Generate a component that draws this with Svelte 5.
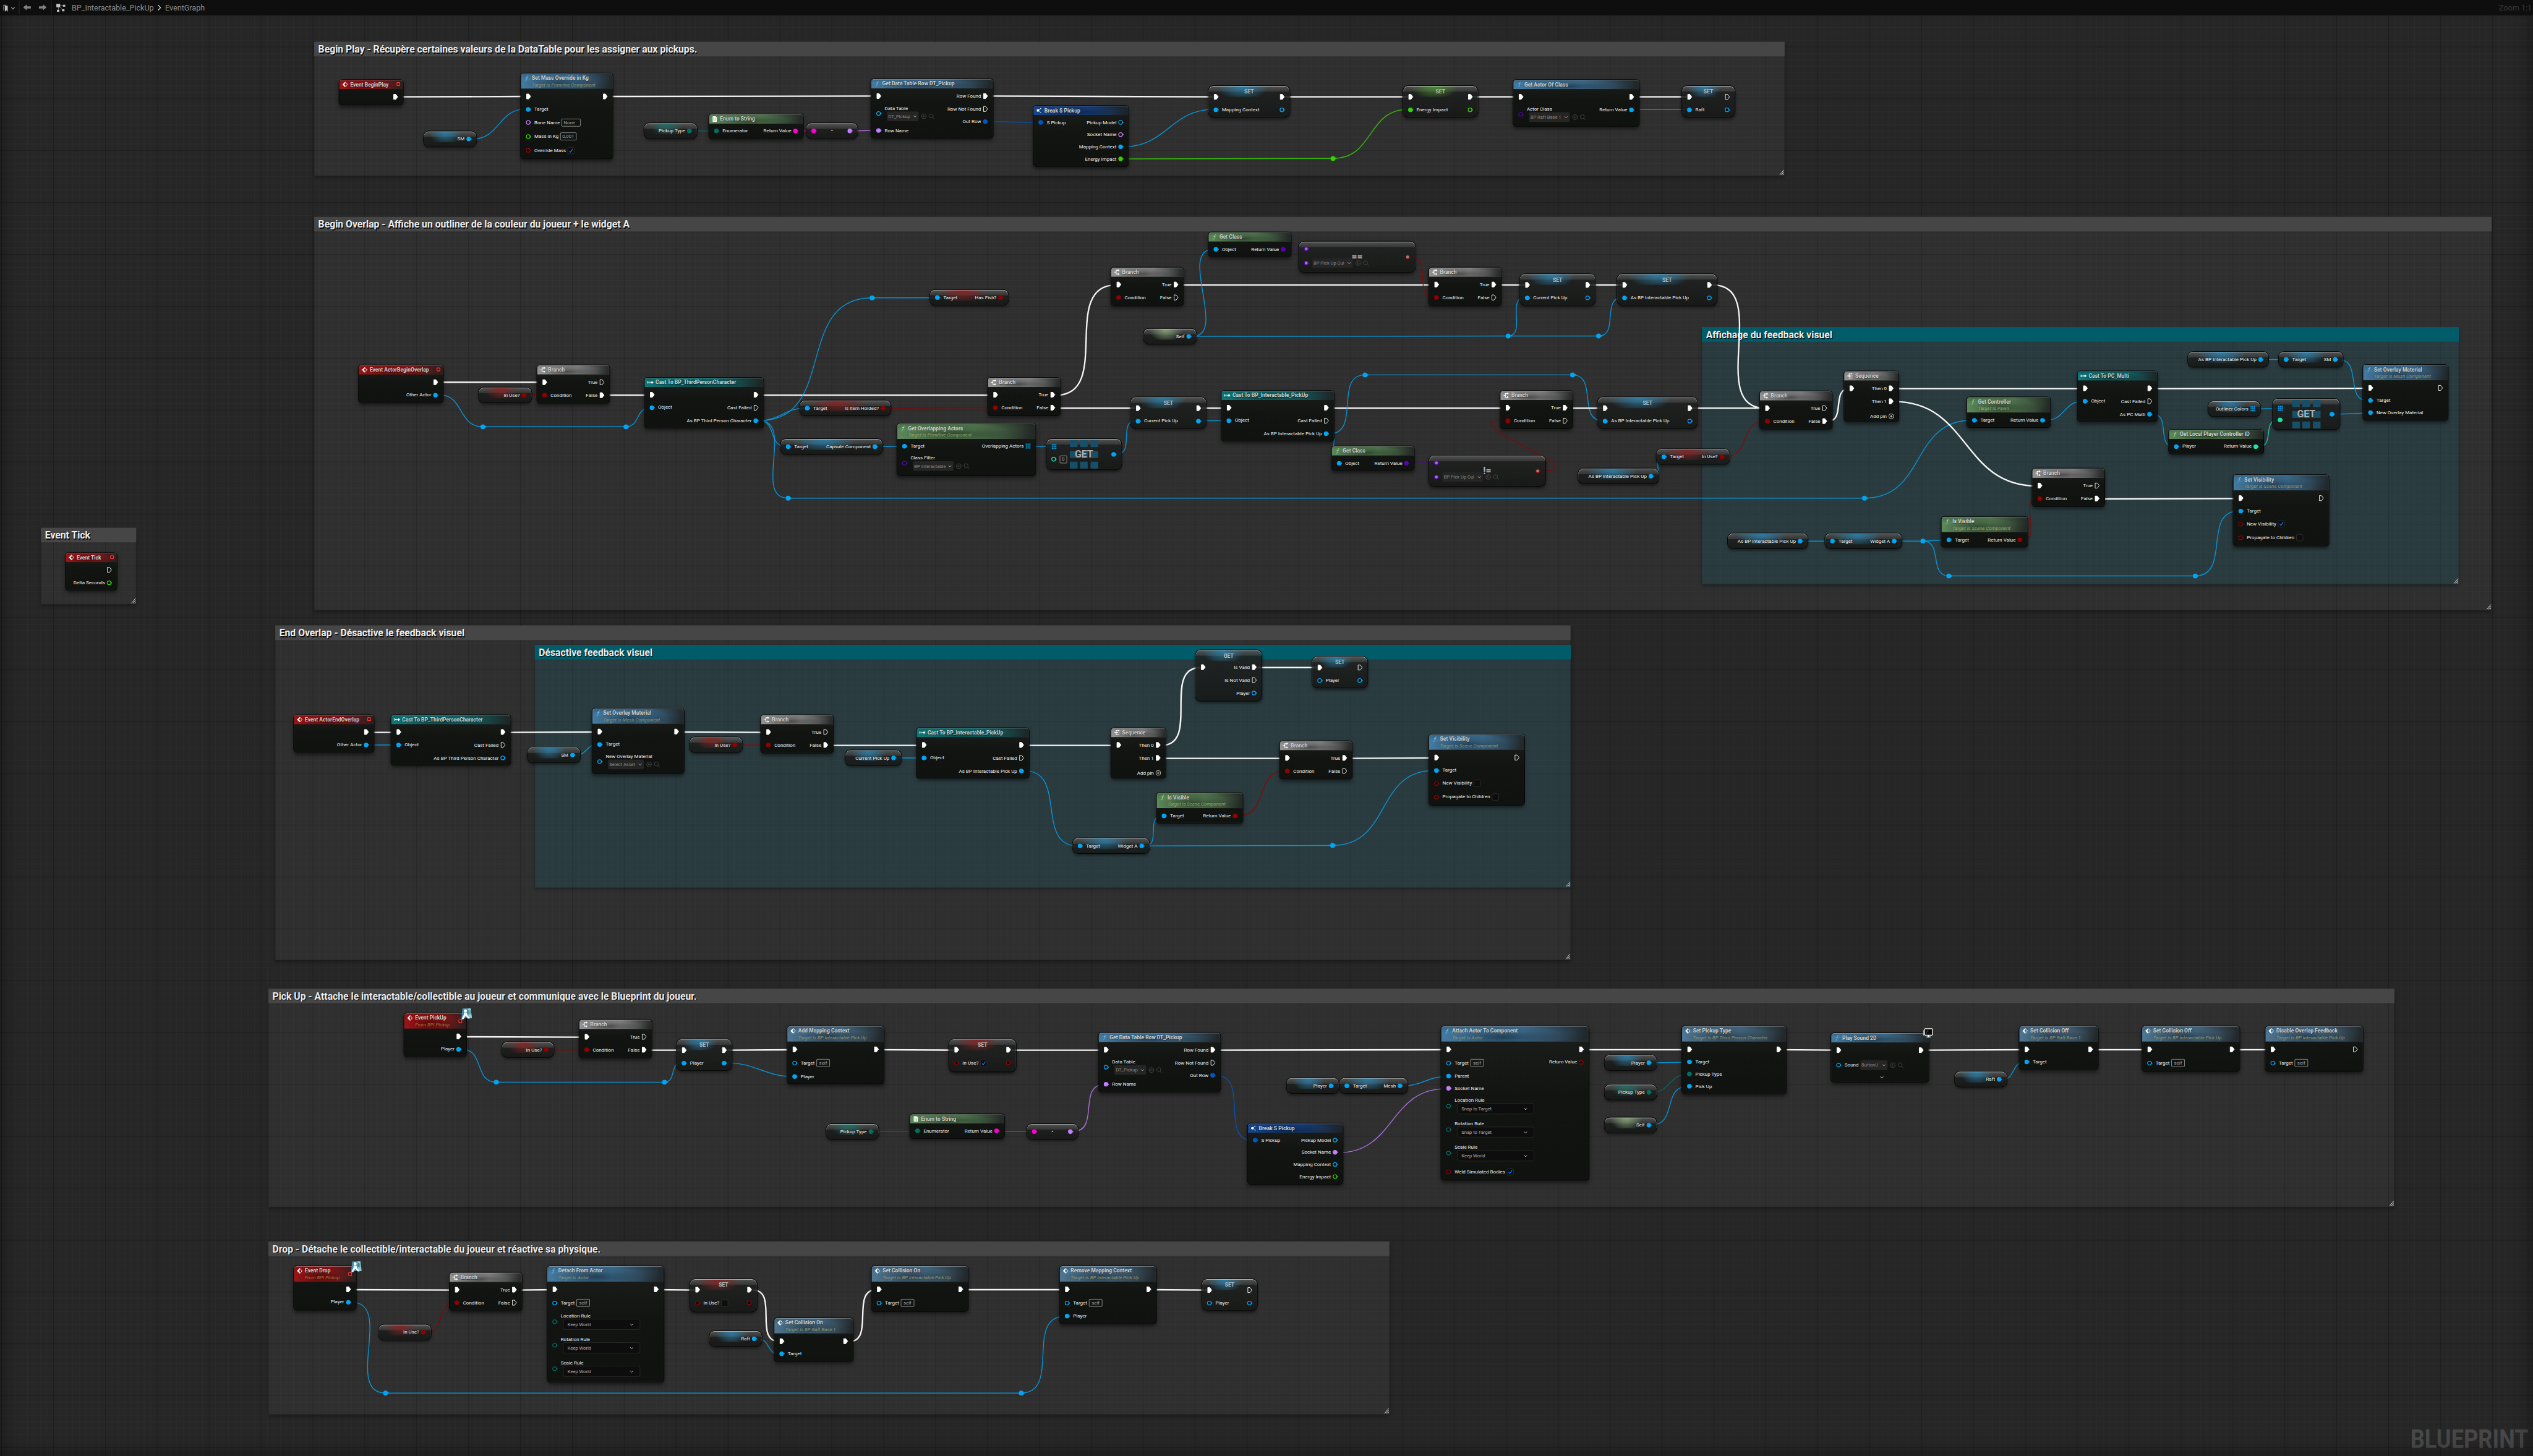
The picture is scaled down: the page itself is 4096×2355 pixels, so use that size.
<script>
  // Pin colours by data type
  const OBJ = '#00a6f4', BOOL = '#930000', ENUM = '#006f65', STR = '#ff00d4', NAME = '#c67ffc';
  const STRUCT = '#0057c8', FLOAT = '#37d200', CLS = '#5b00bb', INT = '#1fe3aa', W = '#ffffff';

  // Pin builders: exec, data, array
  const e = (f = 1, t = '', o = {}) => ({ k: 'e', c: W, f, t, h: 32, ...o });
  const d = (c, f, t = '', o = {}) => ({ k: 'd', c, f, t, h: 30, ...o });

  const self = (h = 35) => d(OBJ, 0, 'Target', { v: 'self', h });
  const rule = (t, en) => d(ENUM, 0, t, { en, h: 58 });

  const comments = [
    { x: 775, y: 103, w: 3627, h: 331, t: 'Begin Play - Récupère certaines valeurs de la DataTable pour les assigner aux pickups.' },
    { x: 775, y: 535, w: 5371, h: 971, t: 'Begin Overlap - Affiche un outliner de la couleur du joueur + le widget A' },
    { x: 4198, y: 807, w: 1867, h: 635, teal: 1, t: 'Affichage du feedback visuel' },
    { x: 101, y: 1302, w: 235, h: 189, t: 'Event Tick' },
    { x: 679, y: 1543, w: 3195, h: 826, t: 'End Overlap - Désactive le feedback visuel' },
    { x: 1319, y: 1591, w: 2556, h: 599, teal: 1, t: 'Désactive feedback visuel' },
    { x: 662, y: 2439, w: 5244, h: 539, t: 'Pick Up - Attache le interactable/collectible au joueur et communique avec le Blueprint du joueur.' },
    { x: 662, y: 3063, w: 2765, h: 427, t: 'Drop - Détache le collectible/interactable du joueur et réactive sa physique.' }
  ];

  const N = (kind, x, y, w, h, title, sub, l, r, o = {}) => ({ kind, x, y, w, h, title, sub, l, r, ...o });
  const branch = (x, y, t, f, c = 1) => N('branch', x, y, 178, 93, 'Branch', '', [e(), d(BOOL, c, 'Condition', { h: 32 })], [e(t, 'True'), e(f, 'False')]);
  const cast = (x, y, w, name, as, f) => N('cast', x, y, w, 123, 'Cast To ' + name, '', [e(), d(OBJ, 1, 'Object', { h: 31 })], [e(), e(0, 'Cast Failed'), d(OBJ, f, as, { h: 32 })]);
  const seq = (x, y) => N('seq', x, y, 134, 123, 'Sequence', '', [e()], [e(1, 'Then 0'), e(1, 'Then 1'), { k: 'plus', t: 'Add pin', h: 42 }]);
  const isVisible = (x, y) => N('pure', x, y, 212, 74, 'Is Visible', 'Target is Scene Component', [d(OBJ, 1, 'Target', { h: 32 })], [d(BOOL, 1, 'Return Value', { h: 32 })]);
  const setVis = (x, y, on) => N('func', x, y, 235, 174, 'Set Visibility', 'Target is Scene Component',
    [e(), d(OBJ, 1, 'Target', { h: 31 }), d(BOOL, 0, 'New Visibility', { cb: on, h: 33 }), d(BOOL, 0, 'Propagate to Children', { cb: 0, h: 35 })], [e(0)]);
  const getRow = (x, y) => N('func', x, y, 300, 145, 'Get Data Table Row DT_Pickup', '',
    [e(), d(OBJ, 0, 'Data Table', { sel: 'DT_Pickup', sw: 78, h: 54 }), d(NAME, 1, 'Row Name')],
    [e(1, 'Row Found'), e(0, 'Row Not Found'), d(STRUCT, 1, 'Out Row')]);
  const brk = (x, y, s, m, g) => N('break', x, y, 234, 149, 'Break S Pickup', '', [d(STRUCT, 1, 'S Pickup')],
    [d(OBJ, 0, 'Pickup Model'), d(NAME, s, 'Socket Name'), d(OBJ, m, 'Mapping Context'), d(FLOAT, g, 'Energy Impact')]);
  const enumStr = (x, y) => N('enum', x, y, 232, 59, 'Enum to String', '', [d(ENUM, 1, 'Enumerator')], [d(STR, 1, 'Return Value')]);
  const getClass = (x, y) => N('pure', x, y, 203, 59, 'Get Class', '', [d(OBJ, 1, 'Object', { h: 32 })], [d(CLS, 1, 'Return Value', { h: 32 })]);

  const nodes = [
    // Begin play
    N('event', 837, 197, 157, 61, 'Event BeginPlay', '', [], [e()]),
    N('func', 1285, 181, 226, 210, 'Set Mass Override in Kg', 'Target is Primitive Component',
      [e(), d(OBJ, 1, 'Target', { h: 31 }), d(NAME, 0, 'Bone Name', { v: 'None', vw: 47, h: 34 }), d(FLOAT, 0, 'Mass in Kg', { v: '0,001', vw: 40, h: 35 }), d(BOOL, 0, 'Override Mass', { cb: 1, h: 34 })], [e()]),
    enumStr(1749, 282),
    getRow(2149, 195),
    brk(2549, 261, 0, 1, 1),
    N('func', 3733, 197, 310, 114, 'Get Actor Of Class', '', [e(), d(CLS, 0, 'Actor Class', { sel: 'BP Raft Base 1', sw: 100, h: 54 })], [e(), d(OBJ, 1, 'Return Value', { h: 31 })]),
    // Begin overlap
    N('event', 885, 901, 208, 91, 'Event ActorBeginOverlap', '', [], [e(), d(OBJ, 1, 'Other Actor', { h: 31 })]),
    branch(1325, 901, 0, 1),
    cast(1590, 932, 293, 'BP_ThirdPersonCharacter', 'As BP Third Person Character', 1),
    branch(2437, 932, 1, 1),
    N('pure', 2213, 1045, 341, 128, 'Get Overlapping Actors', 'Target is Primitive Component', [d(OBJ, 1, 'Target'), d(CLS, 0, 'Class Filter', { sel: 'BP Interactable', sw: 100, h: 54 })], [d(OBJ, 1, 'Overlapping Actors', { k: 'a' })]),
    branch(2741, 660, 1, 0),
    getClass(2981, 573),
    branch(3525, 660, 1, 0),
    cast(3013, 964, 277, 'BP_Interactable_PickUp', 'As BP Interactable Pick Up', 1),
    branch(3701, 964, 1, 0),
    getClass(3285, 1101),
    // Affichage
    branch(4341, 965, 0, 1),
    seq(4549, 916),
    N('pure', 4852, 980, 205, 74, 'Get Controller', 'Target is Pawn', [d(OBJ, 1, 'Target', { h: 32 })], [d(OBJ, 1, 'Return Value', { h: 32 })]),
    cast(5125, 916, 196, 'PC_Multi', 'As PC Multi', 1),
    N('func', 5829, 900, 209, 136, 'Set Overlay Material', 'Target is Mesh Component', [e(), d(OBJ, 1, 'Target'), d(OBJ, 1, 'New Overlay Material')], [e(0)]),
    N('pure', 5350, 1060, 233, 59, 'Get Local Player Controller ID', '', [d(OBJ, 1, 'Player', { h: 31 })], [d(INT, 1, 'Return Value', { h: 31 })]),
    branch(5013, 1156, 0, 1),
    setVis(5509, 1172, 1),
    isVisible(4789, 1275),
    // Event tick
    N('event', 162, 1364, 126, 91, 'Event Tick', '', [], [e(0), d(FLOAT, 0, 'Delta Seconds', { h: 31 })]),
    // End overlap
    N('event', 725, 1764, 197, 91, 'Event ActorEndOverlap', '', [], [e(), d(OBJ, 1, 'Other Actor', { h: 31 })]),
    cast(965, 1764, 294, 'BP_ThirdPersonCharacter', 'As BP Third Person Character', 0),
    N('func', 1461, 1748, 226, 160, 'Set Overlay Material', 'Target is Mesh Component', [e(), d(OBJ, 1, 'Target', { h: 31 }), d(OBJ, 0, 'New Overlay Material', { sel: 'Select Asset', sw: 88, h: 54 })], [e()]),
    branch(1877, 1764, 0, 1),
    cast(2261, 1796, 277, 'BP_Interactable_PickUp', 'As BP Interactable Pick Up', 1),
    seq(2741, 1796),
    branch(3157, 1828, 1, 0),
    isVisible(2853, 1956),
    setVis(3525, 1812, 0),
    // Pick up
    N('event', 997, 2500, 153, 106, 'Event PickUp', 'From BPI Pickup', [], [e(), d(OBJ, 1, 'Player', { h: 31 })], { iface: 1 }),
    branch(1429, 2516, 0, 1),
    N('call', 1942, 2532, 238, 141, 'Add Mapping Context', 'Target is BP Interactable Pick Up', [e(), self(), d(OBJ, 1, 'Player', { h: 32 })], [e()]),
    getRow(2710, 2548),
    enumStr(2245, 2749),
    brk(3078, 2772, 1, 0, 0),
    N('func', 3555, 2532, 364, 379, 'Attach Actor To Component', 'Target is Actor',
      [e(), self(), d(OBJ, 1, 'Parent'), d(NAME, 1, 'Socket Name'), rule('Location Rule', 'Snap to Target'), rule('Rotation Rule', 'Snap to Target'), rule('Scale Rule', 'Keep World'), d(BOOL, 0, 'Weld Simulated Bodies', { cb: 1, h: 34 })],
      [e(), d(BOOL, 0, 'Return Value', { h: 31 })]),
    N('call', 4149, 2532, 257, 166, 'Set Pickup Type', 'Target is BP Third Person Character', [e(), d(OBJ, 1, 'Target'), d(ENUM, 1, 'Pickup Type'), d(OBJ, 1, 'Pick Up')], [e()]),
    N('func', 4517, 2549, 240, 120, 'Play Sound 2D', '', [e(), d(OBJ, 0, 'Sound', { sel: 'ButtonU', sw: 67, inline: 1, h: 41 })], [e()], { more: 1, client: 1 }),
    N('call', 4981, 2532, 194, 106, 'Set Collision Off', 'Target is BP Raft Base 1', [e(), d(OBJ, 1, 'Target')], [e()]),
    N('call', 5284, 2532, 240, 111, 'Set Collision Off', 'Target is BP Interactable Pick Up', [e(), self()], [e()]),
    N('call', 5588, 2532, 240, 111, 'Disable Overlap Feedback', 'Target is BP Interactable Pick Up', [e(), self()], [e(0)]),
    // Drop
    N('event', 725, 3124, 153, 107, 'Event Drop', 'From BPI Pickup', [], [e(), d(OBJ, 1, 'Player', { h: 31 })], { iface: 1 }),
    branch(1109, 3140, 1, 0),
    N('func', 1350, 3124, 287, 285, 'Detach From Actor', 'Target is Actor', [e(), self(), rule('Location Rule', 'Keep World'), rule('Rotation Rule', 'Keep World'), rule('Scale Rule', 'Keep World')], [e()]),
    N('call', 1910, 3252, 194, 106, 'Set Collision On', 'Target is BP Raft Base 1', [e(), d(OBJ, 1, 'Target')], [e()]),
    N('call', 2150, 3124, 238, 111, 'Set Collision On', 'Target is BP Interactable Pick Up', [e(), self()], [e()]),
    N('call', 2614, 3124, 238, 141, 'Remove Mapping Context', 'Target is BP Interactable Pick Up', [e(), self(), d(OBJ, 1, 'Player', { h: 30 })], [e()])
  ];

  // Compact rounded nodes: getters, setters, operators
  const gBlue = '#2c7da6', gRed = '#862424', gTeal = '#226e67', gGreen = '#86a179', gLime = '#4a8a32', gNone = 'transparent';
  const G = (x, y, w, g, l, r) => ({ x, y, w, h: 37, g, l, r, pt: 4 });
  const get = (x, y, w, t, c = OBJ, g = gBlue, k = 'd') => G(x, y, w, g, [], [d(c, 1, t, { k })]);
  const member = (x, y, w, t, c = OBJ, g = gBlue) => G(x, y, w, g, [d(OBJ, 1, 'Target')], [d(c, 1, t)]);
  const set = (x, y, w, t, c, g, inF, outF, o = {}) => ({ x, y, w, h: 76, g, cap: 'SET', pt: 11, l: [e(), d(c, inF, t, { h: 31 })], r: [e(o.ex ?? 1), d(c, outF, '', { h: 31 })] });
  const setUse = (x, y, cb) => ({ x, y, w: 165, h: 80, g: gRed, cap: 'SET', pt: 10, l: [e(), d(BOOL, 0, 'In Use?', { cb, h: 34 })], r: [e(), d(BOOL, 0, '', { h: 31 })] });
  const conv = (x, y) => ({ x, y, w: 126, h: 37, g: gNone, pt: 4, mid: '•', l: [d(STR, 1)], r: [d(NAME, 1)] });
  const op = (x, y, mid, s) => ({ x, y, w: 287, h: 75, g: gNone, pt: 0, mid, big: 1, l: [d(CLS, 2, '', { h: 35 }), d(CLS, 2, '', { sel: s, sw: 100, inline: 1, h: 35 })], r: [d(BOOL, 2, '', { h: 75 })] });

  const pills = [
    get(1045, 324, 130, 'SM'), get(1589, 304, 130, 'Pickup Type', ENUM, gTeal), conv(1989, 304),
    set(2981, 212, 200, 'Mapping Context', OBJ, gBlue, 1, 0), set(3461, 212, 184, 'Energy Impact', FLOAT, gLime, 1, 0), set(4149, 212, 130, 'Raft', OBJ, gBlue, 1, 0, { ex: 0 }),
    get(1181, 956, 130, 'In Use?', BOOL, gRed), member(2294, 715, 193, 'Has Fish?', BOOL, gRed), member(1973, 988, 224, 'Is Item Holded?', BOOL, gRed), member(1926, 1083, 251, 'Capsule Component'),
    op(3204, 596, '==', 'BP Pick Up Cui'), set(3749, 676, 186, 'Current Pick Up', OBJ, gBlue, 1, 0), set(3989, 676, 246, 'As BP Interactable Pick Up', OBJ, gBlue, 1, 0),
    get(2821, 811, 130, 'Self', OBJ, gGreen), set(2789, 980, 186, 'Current Pick Up', OBJ, gBlue, 1, 1), set(3941, 980, 246, 'As BP Interactable Pick Up', OBJ, gBlue, 1, 0),
    op(3525, 1124, '!=', 'BP Pick Up Cui'), get(3893, 1156, 198, 'As BP Interactable Pick Up'), member(4086, 1108, 180, 'In Use?', BOOL, gRed),
    get(5397, 868, 198, 'As BP Interactable Pick Up'), member(5621, 868, 158, 'SM'), get(5447, 990, 128, 'Outliner Colors', OBJ, gBlue, 'a'),
    get(4262, 1316, 197, 'As BP Interactable Pick Up'), member(4502, 1316, 189, 'Widget A'),
    { x: 2581, y: 1083, w: 185, h: 75, g: gNone, pt: 4, arr: 1, l: [d(OBJ, 1, '', { k: 'a', h: 30 }), d(INT, 0, '', { v: '0', vw: 18, h: 32 })], r: [d(OBJ, 1, '', { h: 67 })] },
    { x: 5606, y: 984, w: 165, h: 75, g: gNone, pt: 10, arr: 1, l: [d(OBJ, 1, '', { k: 'a', h: 28 }), d(INT, 1, '', { h: 27 })], r: [d(OBJ, 1, '', { h: 55 })] },
    get(1301, 1844, 130, 'SM'), get(1701, 1819, 130, 'In Use?', BOOL, gRed), get(2085, 1851, 138, 'Current Pick Up'),
    { x: 2949, y: 1604, w: 163, h: 125, g: gBlue, cap: 'GET', pt: 26, l: [e()], r: [e(1, 'Is Valid'), e(0, 'Is Not Valid'), d(OBJ, 0, 'Player', { h: 32 })] },
    set(3237, 1620, 136, 'Player', OBJ, gBlue, 0, 0, { ex: 0 }), member(2646, 2068, 189, 'Widget A'),
    get(1238, 2571, 128, 'In Use?', BOOL, gRed), set(1669, 2564, 136, 'Player', OBJ, gBlue, 1, 1), setUse(2341, 2564, 1),
    get(2038, 2773, 129, 'Pickup Type', ENUM, gTeal), conv(2533, 2773),
    get(3174, 2660, 128, 'Player'), member(3304, 2660, 168, 'Mesh'), get(3958, 2603, 128, 'Player'), get(3958, 2676, 128, 'Pickup Type', ENUM, gTeal), get(3958, 2757, 128, 'Self', OBJ, gGreen),
    get(4822, 2644, 128, 'Raft'), get(934, 3268, 129, 'In Use?', BOOL, gRed), setUse(1702, 3156, 0), get(1750, 3284, 129, 'Raft'),
    set(2965, 3156, 136, 'Player', OBJ, gBlue, 0, 0, { ex: 0 })
  ];

  const wires = [
    [W, 985, 239, 1297, 238], [W, 1501, 238, 2161, 237], [W, 2440, 237, 2993, 239], [W, 3171, 239, 3473, 239], [W, 3635, 239, 3745, 239], [W, 4033, 239, 4161, 239],
    [OBJ, 1165, 343, 1297, 269], [ENUM, 1709, 323, 1761, 323], [STR, 1971, 323, 2001, 323], [NAME, 2105, 323, 2161, 322], [STRUCT, 2439, 300, 2561, 302],
    [OBJ, 2773, 362, 2993, 270], [FLOAT, 2773, 392, 3288, 391], [FLOAT, 3288, 391, 3473, 270], [OBJ, 4033, 270, 4161, 270],
    [W, 1083, 943, 1337, 943], [W, 1493, 975, 1602, 975], [W, 1873, 975, 2449, 975], [OBJ, 1083, 974, 1191, 1053], [OBJ, 1191, 1053, 1544, 1053], [OBJ, 1544, 1053, 1602, 1007],
    [BOOL, 1301, 974, 1337, 974], [OBJ, 1873, 1038, 2151, 735], [OBJ, 2151, 735, 2306, 735], [BOOL, 2477, 734, 2753, 734], [OBJ, 1873, 1038, 1985, 1007], [OBJ, 1873, 1038, 1938, 1102], [OBJ, 1873, 1038, 1944, 1229],
    [BOOL, 2187, 1007, 2449, 1006], [OBJ, 2167, 1102, 2225, 1101], [OBJ, 2544, 1101, 2593, 1102], [W, 2605, 975, 2753, 703], [W, 2605, 1007, 2801, 1007],
    [OBJ, 1944, 1229, 4599, 1229], [OBJ, 4599, 1229, 4864, 1037],
    [W, 2910, 703, 3537, 703], [W, 3694, 703, 3761, 703], [W, 3925, 703, 4001, 703], [OBJ, 2941, 830, 2993, 615], [CLS, 3174, 615, 3216, 614], [BOOL, 3481, 634, 3537, 734],
    [OBJ, 2941, 830, 3720, 829], [OBJ, 3720, 829, 3943, 829], [OBJ, 3720, 829, 3761, 734], [OBJ, 3943, 829, 4001, 734], [W, 4225, 703, 4353, 1007],
    [OBJ, 2756, 1120, 2801, 1038], [W, 2965, 1007, 3025, 1007], [OBJ, 2965, 1038, 3025, 1038], [W, 3280, 1007, 3713, 1007], [OBJ, 3280, 1070, 3367, 925], [OBJ, 3367, 925, 3879, 925], [OBJ, 3879, 925, 3953, 1038],
    [OBJ, 3280, 1070, 3297, 1143], [CLS, 3478, 1143, 3537, 1142], [BOOL, 3801, 1162, 3713, 1038], [W, 3869, 1007, 3953, 1007], [W, 4177, 1007, 4353, 1007],
    [OBJ, 4081, 1175, 4098, 1127], [BOOL, 4256, 1127, 4353, 1039], [W, 4509, 1039, 4561, 959], [W, 4672, 959, 5137, 959], [W, 4672, 991, 5025, 1199], [OBJ, 5047, 1037, 5137, 990],
    [W, 5311, 959, 5841, 958], [OBJ, 5585, 887, 5633, 887], [OBJ, 5769, 887, 5841, 989], [OBJ, 5311, 1022, 5362, 1102], [INT, 5573, 1102, 5618, 1036], [OBJ, 5565, 1009, 5618, 1008], [OBJ, 5761, 1022, 5841, 1019],
    [W, 5181, 1231, 5521, 1230], [OBJ, 4449, 1335, 4514, 1335], [OBJ, 4681, 1335, 4743, 1335], [OBJ, 4743, 1335, 4801, 1332], [BOOL, 4991, 1332, 5025, 1230], [OBJ, 4743, 1335, 4807, 1421], [OBJ, 4807, 1421, 5415, 1421], [OBJ, 5415, 1421, 5521, 1261],
    [W, 912, 1807, 977, 1807], [OBJ, 912, 1838, 977, 1838], [W, 1249, 1807, 1473, 1806], [OBJ, 1421, 1863, 1473, 1837], [W, 1677, 1806, 1889, 1807], [BOOL, 1821, 1838, 1889, 1838], [W, 2045, 1839, 2273, 1839], [OBJ, 2213, 1870, 2273, 1870],
    [W, 2528, 1839, 2753, 1839], [W, 2865, 1839, 2961, 1647], [W, 3102, 1647, 3249, 1647], [W, 2865, 1871, 3169, 1871], [W, 3325, 1871, 3537, 1870], [OBJ, 2528, 1902, 2658, 2087], [OBJ, 2825, 2087, 2865, 2013], [OBJ, 2825, 2087, 3287, 2086], [OBJ, 3287, 2086, 3537, 1901], [BOOL, 3055, 2013, 3169, 1902],
    [W, 1140, 2558, 1441, 2559], [BOOL, 1356, 2591, 1441, 2590], [OBJ, 1140, 2589, 1224, 2670], [OBJ, 1224, 2670, 1639, 2670], [OBJ, 1639, 2670, 1681, 2622], [W, 1597, 2591, 1681, 2591], [W, 1795, 2591, 1954, 2590], [OBJ, 1795, 2622, 1954, 2656],
    [W, 2170, 2590, 2353, 2591], [W, 2496, 2591, 2722, 2591], [ENUM, 2157, 2792, 2257, 2791], [STR, 2467, 2791, 2545, 2791], [NAME, 2649, 2791, 2722, 2676], [STRUCT, 3000, 2654, 3090, 2814],
    [W, 3000, 2591, 3567, 2590], [OBJ, 3292, 2679, 3316, 2679], [OBJ, 3462, 2679, 3567, 2656], [NAME, 3301, 2844, 3567, 2686], [W, 3909, 2590, 4161, 2590], [OBJ, 4076, 2622, 4161, 2621], [ENUM, 4076, 2695, 4161, 2651], [OBJ, 4076, 2775, 4161, 2681],
    [W, 4396, 2590, 4529, 2591], [W, 4747, 2591, 4993, 2590], [OBJ, 4940, 2663, 4993, 2621], [W, 5165, 2590, 5296, 2590], [W, 5514, 2590, 5600, 2590],
    [W, 868, 3182, 1121, 3183], [OBJ, 868, 3213, 951, 3437], [OBJ, 951, 3437, 2519, 3437], [OBJ, 2519, 3437, 2626, 3248], [BOOL, 1053, 3287, 1121, 3214], [W, 1276, 3183, 1362, 3182], [W, 1627, 3182, 1714, 3183],
    [W, 1857, 3183, 1922, 3310], [OBJ, 1869, 3303, 1922, 3341], [W, 2094, 3310, 2162, 3182], [W, 2378, 3182, 2626, 3182], [W, 2842, 3182, 2977, 3183]
  ];

  const dots = [
    [FLOAT, 3288, 391], [OBJ, 1191, 1053], [OBJ, 1544, 1053], [OBJ, 2151, 735], [OBJ, 1944, 1229], [OBJ, 3720, 829], [OBJ, 3943, 829], [OBJ, 3367, 925], [OBJ, 3879, 925],
    [OBJ, 4743, 1335], [OBJ, 4807, 1421], [OBJ, 5415, 1421], [OBJ, 4599, 1229], [OBJ, 3287, 2086], [OBJ, 1224, 2670], [OBJ, 1639, 2670], [OBJ, 951, 3437], [OBJ, 2519, 3437]
  ];

  // Horizontal-tangent spline; backward links get a longer tangent
  function path([, x1, y1, x2, y2]) {
    const dx = x2 - x1, ax = Math.abs(dx), ay = Math.abs(y2 - y1);
    if (ay < 4) return `M${x1} ${y1}L${x2} ${y2}`;
    const t = (dx >= 0 ? Math.min(ax, 1000) + Math.min(ay, 1000) : 3 * Math.min(ax, 200) + 1.5 * Math.min(ay, 200)) / 3;
    return `M${x1} ${y1}C${x1 + t} ${y1} ${x2 - t} ${y2} ${x2} ${y2}`;
  }
</script>

{#snippet icon(kind)}
  <svg class="icon" viewBox="0 0 16 16">
    {#if kind === 'func' || kind === 'pure'}
      <path d="M12.2 2.4C10.6 1.2 9.4 2 9 4L7.2 12.2C6.8 14.2 5.4 14.8 4 13.8M5.6 6.2H11" fill="none" stroke={kind === 'func' ? '#6cc0f5' : '#9be08c'} stroke-width="1.5" />
    {:else if kind === 'event' || kind === 'call'}
      <path d="M8 1.5L2 8L8 14.5M8 1.5L14 8L8 14.5" fill="none" stroke="#fff" stroke-width="1.6" />
      <path d="M1 8L8 1V5.4L5.6 8L8 10.6V15Z" fill="#fff" />
    {:else if kind === 'cast'}
      <path d="M0 5H2V11H0ZM3 6.2H5V9.8H3ZM6 6.6H7.6V9.4H6ZM8.4 6.6H11V3.8L16 8L11 12.2V9.4H8.4Z" fill="#fff" />
    {:else if kind === 'branch'}
      <path d="M1 8H5M11 3H5.5V13H11" fill="none" stroke="#fff" stroke-width="1.8" />
      <path d="M10 0L14.5 3L10 6ZM10 10L14.5 13L10 16Z" fill="#fff" />
    {:else if kind === 'seq'}
      <path d="M1 8H5M14 2.6H5.5V13.4H14M5.5 8H14" fill="none" stroke="#fff" stroke-width="2" stroke-dasharray="5 1.2" />
    {:else if kind === 'enum'}
      <path d="M2 1H10L13 4V15.5H2Z" fill="#fff" />
      <path d="M4 6H11M4 9H11M4 12H11" stroke="#6f8f6c" stroke-width="1.4" stroke-dasharray="2.5 1" />
    {:else}
      <path d="M5 8C9 8 8 2.5 13 2.5M5 8C9 8 8 13.5 13 13.5" fill="none" stroke="#fff" stroke-width="1.5" />
      <circle cx="4.4" cy="8" r="3.4" fill="#fff" />
    {/if}
  </svg>
{/snippet}

{#snippet shape(p)}
  <svg class="pin" viewBox="0 0 14 16">
    {#if p.k === 'e'}
      <path d="M2 1.8H7.2L12 8L7.2 14.2H2Z" fill={p.f ? '#fff' : 'none'} stroke="#fff" stroke-width="1.4" stroke-linejoin="round" />
    {:else if p.k === 'a'}
      <path d="M2.8 1.5V14.5M7 1.5V14.5M11.2 1.5V14.5" stroke={p.c} stroke-width="3" stroke-dasharray="3 1.6" />
    {:else if p.k === 'plus'}
      <circle cx="7" cy="8" r="6" fill="none" stroke="#ddd" stroke-width="1.3" />
      <path d="M7 4.8V11.2M3.8 8H10.2" stroke="#ddd" stroke-width="1.3" />
    {:else}
      <circle cx="6" cy="8" r="4.6" fill={p.f === 1 ? p.c : p.f === 2 ? '#8b8b8b' : '#080a09'} stroke={p.c} stroke-width="2" />
      <path d="M11.2 5.6L13.8 8L11.2 10.4Z" fill={p.c} />
    {/if}
  </svg>
{/snippet}

{#snippet row(p, right)}
  <div class="row" class:right style:height="{p.h}px">
    {@render shape(p)}
    <div class="stack" class:inline={p.inline || (!p.sel && !p.en)}>
      {#if p.t}<span class="label">{p.t}</span>{/if}
      {#if p.v}<span class="value" style:width={p.vw ? p.vw + 'px' : null}>{p.v}</span>{/if}
      {#if p.cb !== undefined}
        <span class="check">
          {#if p.cb}<svg viewBox="0 0 16 16"><path d="M3.5 8.5L6.6 12L12.5 3.5" fill="none" stroke="#0f7dff" stroke-width="2" /></svg>{/if}
        </span>
      {/if}
      {#if p.sel}
        <div class="asset">
          <span class="combo" style:width="{p.sw}px"><span class="ctext">{p.sel}</span>
            <svg class="chev" viewBox="0 0 10 10"><path d="M1.5 3L5 7L8.5 3" fill="none" stroke="#a5a5a5" stroke-width="1.5" /></svg></span>
          <svg class="mini" viewBox="0 0 36 16"><g fill="none" stroke="#474747" stroke-width="1.4"><circle cx="8" cy="8" r="6" /><path d="M12 8H5.5M8 5.3L5.2 8L8 10.7" /><circle cx="26" cy="7" r="5" /><path d="M29.5 10.6L34 15" /></g></svg>
        </div>
      {/if}
      {#if p.en}
        <span class="enum"><span>{p.en}</span>
          <svg class="chev" viewBox="0 0 10 10"><path d="M1.5 3L5 7L8.5 3" fill="none" stroke="#c5c5c5" stroke-width="1.4" /></svg></span>
      {/if}
    </div>
  </div>
{/snippet}

{#snippet columns(n)}
  <div class="col">{#each n.l as p}{@render row(p, false)}{/each}</div>
  <div class="col end">{#each n.r as p}{@render row(p, true)}{/each}</div>
{/snippet}

<div class="window">
  <div class="graph">
    {#each comments as c}
      <section class="comment" class:teal={c.teal} style:left="{c.x}px" style:top="{c.y}px" style:width="{c.w}px" style:height="{c.h}px">
        <h2>{c.t}</h2>
        <svg class="grip" viewBox="0 0 12 14"><path d="M1 13.5L11.5 1M5 13.5L11.5 5.5M9 13.5L11.5 10" stroke="#e6e6e6" stroke-width="1.4" /></svg>
      </section>
    {/each}

    <svg class="wires" viewBox="0 0 6248 3592">
      {#each wires as w}
        <path class="wire" d={path(w)} stroke={w[0]} class:exec={w[0] === W} />
      {/each}
      {#each dots as [c, x, y]}
        <circle cx={x} cy={y} r="6" fill={c} />
        <path d="M{x + 6} {y - 3}L{x + 9} {y}L{x + 6} {y + 3}Z" fill={c} />
      {/each}
    </svg>

    {#each nodes as n}
      <article class="node {n.kind}" style:left="{n.x}px" style:top="{n.y}px" style:width="{n.w}px" style:height="{n.h}px">
        <header class:two={n.sub}>
          {@render icon(n.kind)}
          <div class="titles">
            <strong>{n.title}</strong>
            {#if n.sub}<em>{n.sub}</em>{/if}
          </div>
          {#if n.kind === 'event'}<i class="delegate" class:low={n.iface}></i>{/if}
        </header>
        <div class="body">{@render columns(n)}</div>
        {#if n.more}
          <svg class="more" viewBox="0 0 10 10"><path d="M1.5 3L5 7L8.5 3" fill="none" stroke="#ddd" stroke-width="1.5" /></svg>
        {/if}
        {#if n.iface}
          <svg class="badge" viewBox="0 0 28 28">
            <path d="M5 1H25L28 25H2Z" fill="#3d8fab" />
            <path d="M18 1H25L28 25H20Z" fill="#8fd0d8" />
            <circle cx="12" cy="7" r="3.8" fill="#fff" />
            <path d="M8.500 11H15L17 17L23 26H18.500L12.500 19L7 28H2L8 17Z" fill="#f3f8fa" />
            <path d="M20 5V15M23.500 6V16" stroke="#2b5f70" stroke-width="1.4" />
          </svg>
        {/if}
        {#if n.client}
          <svg class="screen" viewBox="0 0 26 26">
            <rect x="3" y="2" width="20" height="16" rx="2" fill="#0a0a0a" stroke="#fff" stroke-width="2" />
            <path d="M8 22.500H18M13 19V22" stroke="#fff" stroke-width="2.4" />
            <path d="M1 6V19" stroke="#fff" stroke-width="1.2" />
            <path d="M6 15L12 5" stroke="#777" stroke-width="1" />
          </svg>
        {/if}
      </article>
    {/each}

    {#each pills as n}
      <article class="pill" style:left="{n.x}px" style:top="{n.y}px" style:width="{n.w}px" style:height="{n.h}px" style:padding-top="{n.pt}px" style:--glow={n.g}>
        {#if n.arr}
          <div class="cells">{#each Array(9) as _}<i></i>{/each}</div>
          <b class="mid big">GET</b>
        {/if}
        {#if n.cap}<b class="cap">{n.cap}</b>{/if}
        {#if n.mid}<b class="mid" class:big={n.big}>{n.mid}</b>{/if}
        {@render columns(n)}
      </article>
    {/each}

    <div class="watermark">BLUEPRINT</div>
    <div class="vignette"></div>
    <nav>
      <svg class="tools" viewBox="0 0 170 38">
        <path d="M8 12H15V14H10V25L8 26Z" fill="#777" />
        <path d="M12 14H19V29L15.500 25L12 29Z" fill="#c4c4c4" />
        <path d="M28 18L32 22.500L36 18" fill="none" stroke="#c4c4c4" stroke-width="1.6" />
        <path d="M47.500 2V36M126.500 2V36" stroke="#1f1f1f" stroke-width="2.500" />
        <path d="M57 18L66 11V15.500H76V21H66V25.500Z" fill="#828282" />
        <path d="M115 18L106 11V15.500H96V21H106V25.500Z" fill="#828282" />
        <path d="M143 14H158M144 14V26M144 14L156 25" stroke="#8a8a8a" stroke-width="1.2" />
        <path d="M139 9.500H148.500V18H139ZM155 12H161V16.500H155ZM140.500 24H146.500V29H140.500ZM153 23H159V28H153Z" fill="#c4c4c4" />
      </svg>
      <span>BP_Interactable_PickUp</span>
      <svg class="sep" viewBox="0 0 10 16"><path d="M2 1.500L8 8L2 14.500" fill="none" stroke="#f0f0f0" stroke-width="1.8" /></svg>
      <span>EventGraph</span>
      <span class="zoom">Zoom 1:1</span>
    </nav>
  </div>
</div>

<style>
  :global(body) { background: #262626; overflow: hidden; }
  .window { width: 4096px; height: 2355px; overflow: hidden; }
  .graph {
    position: relative; width: 6248px; height: 3592px; overflow: hidden;
    transform: scale(0.65557); transform-origin: 0 0;
    font-family: Roboto, "Liberation Sans", sans-serif; color: #e4e4e4;
    background:
      linear-gradient(90deg, #1d1d1d 2px, transparent 2px) 3px 0 / 128px 128px,
      linear-gradient(#1d1d1d 2px, transparent 2px) 0 115px / 128px 128px,
      linear-gradient(90deg, #2a2a2a 1px, transparent 1px) 3px 0 / 16px 16px,
      linear-gradient(#2a2a2a 1px, transparent 1px) 0 3px / 16px 16px,
      #262626;
  }

  nav {
    position: absolute; left: 0; top: 0; width: 100%; height: 38px; box-sizing: border-box; padding-right: 3px;
    display: flex; align-items: center; background: rgba(13, 13, 13, .93); font-size: 19.2px; color: #8b8b8b;
  }
  .tools { width: 170px; height: 38px; margin-right: 7px; }
  .sep { width: 10px; height: 16px; margin: 0 9px; }
  .zoom { margin-left: auto; color: #363636; }

  .comment { position: absolute; background: rgba(255, 255, 255, .042); box-shadow: 0 4px 8px rgba(0, 0, 0, .35), inset 0 0 0 1px rgba(0, 0, 0, .15); }
  .comment.teal { background: rgba(23, 108, 128, .2); }
  .comment h2 {
    margin: 0; height: 36px; padding-left: 10px; line-height: 39px; white-space: nowrap;
    font-size: 24px; font-weight: 700; color: #ececec; background: #464646; text-shadow: 2px 2px 0 #0c0c0c;
  }
  .comment.teal h2 { background: #005c69; }
  .grip { position: absolute; right: 1px; bottom: 2px; width: 12px; height: 14px; }

  .wires { position: absolute; left: 0; top: 0; width: 6248px; height: 3592px; }
  .wire { fill: none; stroke-width: 2.2; opacity: .82; }
  .wire.exec { stroke-width: 3.6; opacity: .95; }

  .node {
    position: absolute; box-sizing: border-box; border-radius: 7px;
    background: linear-gradient(#1c1e1c, #111410 45%, #0f120f);
    box-shadow: 0 0 0 1.500px #050505, 0 6px 9px rgba(0, 0, 0, .55);
  }
  .node header {
    height: 23px; display: flex; box-sizing: border-box; padding: 4px 7px 0 7px; gap: 5px;
    border-radius: 7px 7px 0 0; box-shadow: inset 0 1.500px 0 rgba(255, 255, 255, .3);
    background:
      radial-gradient(ellipse 40% 65% at 42% 70%, rgba(0, 0, 0, .48), transparent),
      linear-gradient(105deg, transparent 55%, rgba(30, 32, 32, .9) 96%),
      linear-gradient(#0003, transparent 40%),
      var(--tone);
  }
  .node header.two { height: 38px; }
  .func { --tone: #44799f; }
  .call { --tone: #4d7591; }
  .pure, .enum:not(span) { --tone: #5b8659; }
  .cast { --tone: #0f7577; }
  .branch, .seq { --tone: #929292; }
  .event { --tone: #9c1416; }
  .break { --tone: #174489; }
  .icon { width: 15px; height: 15px; flex: none; }
  .titles { display: flex; flex-direction: column; white-space: nowrap; }
  strong { font-size: 13px; line-height: 16px; font-weight: 700; color: #cdcfcf; text-shadow: 1px 1px 1px #0006; }
  em { font-size: 12px; line-height: 16px; color: #8f9676; font-weight: 400; }
  .pure em { color: #95a76b; }
  .event em { color: #a5713c; }
  .delegate { margin: 2px 0 0 auto; width: 5px; height: 5px; border: 2.500px solid #ff3a34; border-radius: 2px; background: #300; flex: none; }
  .delegate.low { margin-top: 11px; margin-right: 3px; }

  .body { display: flex; justify-content: space-between; padding-top: 3px; }
  .col { display: flex; flex-direction: column; position: relative; }
  .col.end { align-items: flex-end; }
  .row { display: flex; align-items: center; gap: 7px; padding: 0 0 0 12px; }
  .row.right { flex-direction: row-reverse; gap: 4px; padding: 0 11px 0 0; }
  .pin { width: 14px; height: 16px; flex: none; }
  .stack { display: flex; flex-direction: column; align-items: flex-start; margin-top: -2px; }
  .stack.inline { flex-direction: row; align-items: center; gap: 4px; margin-top: 0; }
  .label { font-size: 12.200px; line-height: 16px; margin-top: -1px; white-space: nowrap; color: #f4f4f4; text-shadow: 1px 1px 1px #0007; }
  .value {
    box-sizing: border-box; height: 19px; padding: 0 6px; border: 1.200px solid #c2c2c2; border-radius: 2px;
    font-size: 12px; line-height: 16px; color: #a2a2a2; min-width: 18px;
  }
  .value[style] { padding: 0 4px; }
  .check { width: 17px; height: 17px; box-sizing: border-box; border: 1px solid #3a3a3a; border-radius: 3px; background: #0d0d0d; display: flex; }
  .asset { display: flex; align-items: center; gap: 5px; margin-left: 6px; }
  .inline > .asset { margin-left: 0; }
  .combo { box-sizing: border-box; height: 24px; padding: 0 4px 0 3px; background: #242524; border-radius: 3px; display: flex; align-items: center; justify-content: space-between; gap: 3px; }
  .ctext { font-size: 11.500px; white-space: nowrap; color: #8c8c8c; }
  .chev { width: 10px; height: 10px; flex: none; }
  .mini { width: 36px; height: 16px; }
  span.enum {
    box-sizing: border-box; width: 190px; height: 27px; margin-left: 6px; padding: 0 15px 0 10px; border: 1px solid #343434; border-radius: 4px;
    background: #0d0d0d; display: flex; align-items: center; justify-content: space-between; font-size: 11.500px; color: #b2b2b2;
  }
  .more { position: absolute; left: 50%; bottom: 6px; width: 10px; height: 10px; }
  .badge { position: absolute; right: -14px; top: -13px; width: 28px; height: 28px; }
  .screen { position: absolute; right: -13px; top: -13px; width: 26px; height: 26px; }

  .pill {
    position: absolute; box-sizing: border-box; border-radius: 13px; display: flex; justify-content: space-between;
    box-shadow: 0 0 0 1.500px #060606, 0 5px 8px rgba(0, 0, 0, .55), inset 0 1.500px 1px rgba(255, 255, 255, .5);
    background:
      radial-gradient(ellipse 32% 130% at 42% 0, var(--glow), transparent) 0 0 / 100% 27px no-repeat,
      linear-gradient(rgba(255, 255, 255, .22), rgba(255, 255, 255, .09)) 0 0 / 100% 14px no-repeat,
      linear-gradient(rgba(32, 34, 33, .88), rgba(22, 24, 22, .9));
  }
  .cap { position: absolute; left: 0; right: 0; top: 7px; text-align: center; font-size: 13px; line-height: 16px; color: #b4bcbf; }
  .mid { position: absolute; left: 0; right: 0; top: 9px; text-align: center; font-size: 15px; line-height: 18px; color: #a0a0a0; }
  .mid.big { top: 24px; font-size: 24px; line-height: 28px; color: #a9aeb0; }
  .cells { position: absolute; left: 50%; top: 3px; width: 70px; height: 70px; margin-left: -35px; display: grid; grid-template: repeat(3, 17px) / repeat(3, 19px); justify-content: space-between; align-content: space-between; }
  .cells i { background: #174f69; }

  .watermark { position: absolute; right: 11px; bottom: 12px; font-size: 65px; line-height: 60px; font-weight: 700; color: rgba(255, 255, 255, .17); transform: scaleX(.85); transform-origin: 100% 50%; }
  .vignette { position: absolute; inset: 0; box-shadow: inset 0 0 50px rgba(0, 0, 0, .45); }
</style>
